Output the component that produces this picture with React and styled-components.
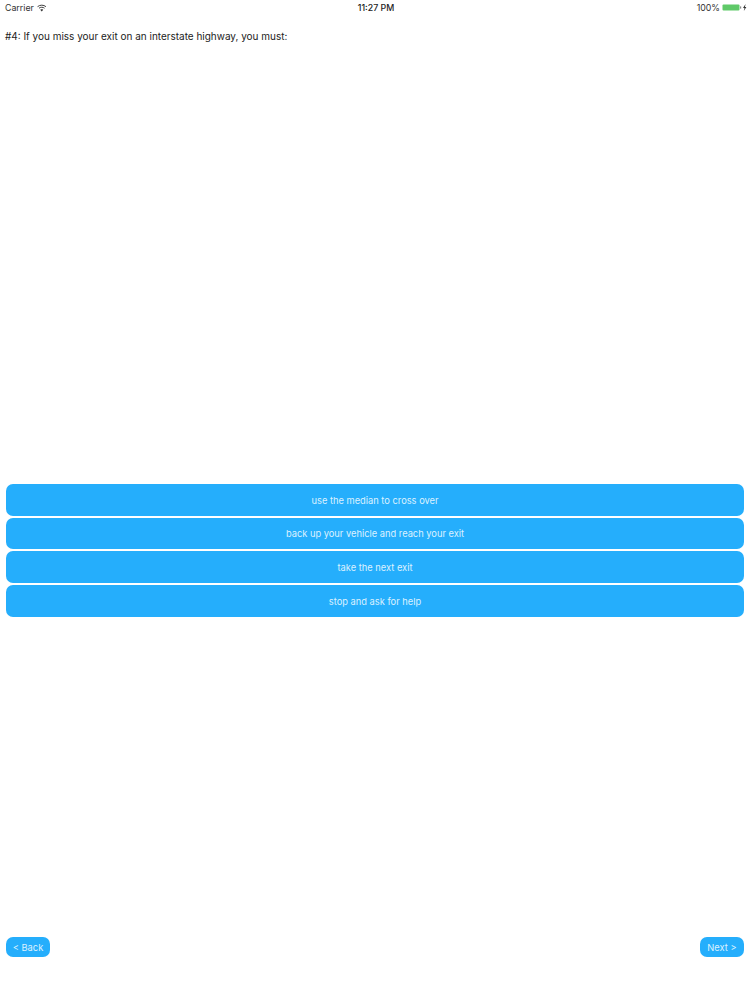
import React from "react";
import styled, { createGlobalStyle } from "styled-components";

const Global = createGlobalStyle`
  html, body { margin: 0; padding: 0; background: #fff; }
  body { font-family: "Inter", "Liberation Sans", sans-serif; -webkit-font-smoothing: antialiased; }
  * { box-sizing: border-box; }
`;

const Page = styled.div`
  width: 750px;
  height: 1000px;
  display: flex;
  flex-direction: column;
  overflow: hidden;
  background: #fff;
`;

const StatusBar = styled.header`
  height: 15px;
  flex: none;
  display: grid;
  grid-template-columns: 1fr auto 1fr;
  align-items: center;
  padding: 0 3px 0 5px;
  font-size: 8.8px;
  color: #333;
`;

const StatusLeft = styled.div`
  display: flex;
  align-items: center;
  gap: 3px;
`;

const StatusTime = styled.div`
  font-weight: 500;
  color: #222;
`;

const StatusRight = styled.div`
  display: flex;
  align-items: center;
  justify-content: flex-end;
  gap: 2px;
`;

const Question = styled.h1`
  margin: 14px 0 0 5px;
  height: 14px;
  font-size: 9.97px;
  line-height: 14px;
  font-weight: 400;
  color: #222;
  flex: none;
`;

const Answers = styled.div`
  margin: 441px 6px 0;
  display: flex;
  flex-direction: column;
  gap: 2px;
  flex: none;
`;

const Answer = styled.button`
  height: 31.7px;
  border: none;
  border-radius: 7px;
  background: #25aefc;
  color: #dcf1ff;
  font: 400 9.3px/1 "Inter", "Liberation Sans", sans-serif;
  padding: 1px 0 0;
`;

const Nav = styled.nav`
  margin: 320px 6px 0;
  display: flex;
  justify-content: space-between;
  flex: none;
`;

const NavButton = styled.button`
  width: 44px;
  height: 20px;
  border: none;
  border-radius: 7px;
  background: #25aefc;
  color: #dcf1ff;
  font: 400 9.3px/1 "Inter", "Liberation Sans", sans-serif;
  padding: 1px 0 0;
`;

const Wifi = () => (
  <svg width="9.5" height="8" viewBox="0 0 10 8" fill="none" stroke="#333" strokeWidth="1">
    <path d="M0.6 2.6C3 .5 7 .5 9.4 2.6" />
    <path d="M2.1 4.2C3.7 2.9 6.3 2.9 7.9 4.2" />
    <path d="M5 7.6L3.5 5.8C4.4 5.1 5.6 5.1 6.5 5.8Z" fill="#333" stroke="none" />
  </svg>
);

const Battery = () => (
  <svg width="25" height="9" viewBox="0 0 25 9">
    <rect x="0.5" y="1.5" width="17" height="6" rx="1" fill="#5fc968" />
    <rect x="18" y="3.4" width="1.2" height="2.2" fill="#888" />
    <path d="M23.6 1L21 5H22.5L21.8 8L24.4 4H22.9Z" fill="#333" />
  </svg>
);

const answers = [
  "use the median to cross over",
  "back up your vehicle and reach your exit",
  "take the next exit",
  "stop and ask for help",
];

export default function App() {
  return (
    <Page>
      <Global />
      <StatusBar>
        <StatusLeft>Carrier <Wifi /></StatusLeft>
        <StatusTime>11:27 PM</StatusTime>
        <StatusRight>100% <Battery /></StatusRight>
      </StatusBar>
      <Question>#4: If you miss your exit on an interstate highway, you must:</Question>
      <Answers>
        {answers.map((a) => <Answer key={a}>{a}</Answer>)}
      </Answers>
      <Nav>
        <NavButton>&lt; Back</NavButton>
        <NavButton>Next &gt;</NavButton>
      </Nav>
    </Page>
  );
}
